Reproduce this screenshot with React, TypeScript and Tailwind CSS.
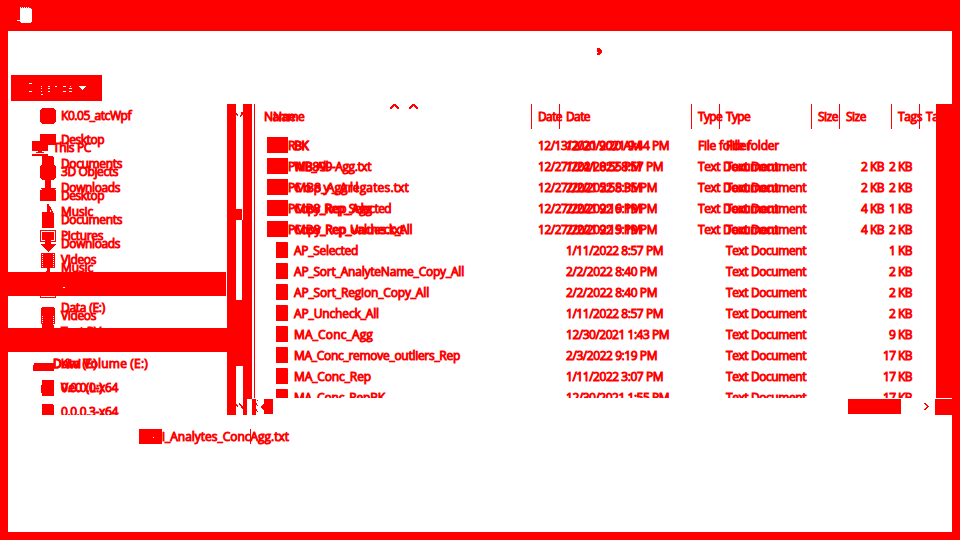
import { useLayoutEffect, useRef, useState } from 'react';

// A label whose tracking is tuned so that it fills the given width.
function Label({ text, width }: { text: string; width: number }) {
  const ref = useRef<HTMLSpanElement>(null);
  const [spacing, setSpacing] = useState(0);
  useLayoutEffect(() => {
    if (ref.current) {
      ref.current.style.letterSpacing = '0px';
      const natural = ref.current.getBoundingClientRect().width;
      setSpacing((width - natural) / text.length);
      ref.current.style.letterSpacing = `${(width - natural) / text.length}px`;
    }
  }, [text, width]);
  return (
    <span ref={ref} className="inline-block whitespace-pre" style={{ letterSpacing: `${spacing}px` }}>
      {text}
    </span>
  );
}

type IconName =
  | 'object' | 'desktop' | 'doc' | 'down' | 'music' | 'picture' | 'video' | 'pc' | 'drive' | 'disk' | 'volume' | 'none';

const shapes: Record<IconName, string> = {
  none: '',
  object: 'M2 0H14V1H15V2H16V14H15V15H14V16H2V15H1V14H0V2H1V1H2Z',
  desktop: 'M0 2H16V13H0Z',
  doc: 'M2 0H12L14 1V16H2Z',
  down: 'M5 -2H11V8H16L8 16L0 8H5Z',
  music: 'M7 0H9V2L11 4L13 8H11V6H10V12L8 15H4V12L7 11Z',
  picture: 'M0 2H16V14H0Z M1 3V13H15V3Z M2 4H14V12H2Z',
  video: 'M1 1H15V16H1Z M2 2V3H3V2Z M2 4V5H3V4Z M2 6V7H3V6Z M2 8V9H3V8Z M2 10V11H3V10Z M2 12V13H3V12Z M2 14V15H3V14Z M13 2V3H14V2Z M13 4V5H14V4Z M13 6V7H14V6Z M13 8V9H14V8Z M13 10V11H14V10Z M13 12V13H14V12Z M13 14V15H14V14Z',
  pc: 'M0 1H16V11H0Z M6 11H10V12H12V13H4V12H6Z M0 14H16V16H0Z',
  drive: 'M2 7H22V15H1V9H2Z',
  disk: 'M2 0H14V16H2V13H1V5H2Z',
  volume: 'M2 7H14V8H15V15H1V8H2Z',
};

function Icon({ name }: { name: IconName }) {
  return (
    <svg width="16" height="16" viewBox="0 0 16 16" className="shrink-0 overflow-visible" shapeRendering="crispEdges">
      <path d={shapes[name]} fill="#ff0000" fillRule="evenodd" />
    </svg>
  );
}

type Node = { icon: IconName; text: string; width: number; root?: boolean; gap?: boolean };

const treeA: Node[] = [
  { icon: 'object', text: 'K0.05_atcWpf', width: 70 },
  { icon: 'desktop', text: 'Desktop', width: 43 },
  { icon: 'doc', text: 'Documents', width: 61 },
  { icon: 'down', text: 'Downloads', width: 59 },
  { icon: 'music', text: 'Music', width: 32 },
  { icon: 'picture', text: 'Pictures', width: 42 },
  { icon: 'video', text: 'Videos', width: 35 },
  { icon: 'none', text: '', width: 1 },
  { icon: 'volume', text: 'Data (E:)', width: 44 },
  { icon: 'doc', text: 'Test PV', width: 40 },
  { icon: 'drive', text: 'Data Volume (E:)', width: 95, root: true, gap: true },
  { icon: 'doc', text: '0.0.0.0-x64', width: 57 },
  { icon: 'doc', text: '0.0.0.3-x64', width: 57 },
];

const treeB: Node[] = [
  { icon: 'pc', text: 'This PC', width: 38, root: true },
  { icon: 'object', text: '3D Objects', width: 57 },
  { icon: 'desktop', text: 'Desktop', width: 43 },
  { icon: 'doc', text: 'Documents', width: 61 },
  { icon: 'down', text: 'Downloads', width: 59 },
  { icon: 'music', text: 'Music', width: 32 },
  { icon: 'picture', text: '', width: 1 },
  { icon: 'video', text: 'Videos', width: 35 },
  { icon: 'none', text: '', width: 1 },
  { icon: 'none', text: 'DKiwi (E:)', width: 43, root: true },
  { icon: 'disk', text: 'Ve0 (L:)', width: 42 },
];

function Tree({ nodes }: { nodes: Node[] }) {
  return (
    <>
      {nodes.map((n, i) => (
        <div key={i} className={`flex h-6 shrink-0 items-start leading-6 ${n.root ? 'pl-6' : 'pl-8'} ${n.gap ? 'mt-2' : ''}`}>
          <div className="pt-1"><Icon name={n.icon} /></div>
          <div className="ml-[5px]"><Label text={n.text} width={n.width} /></div>
        </div>
      ))}
    </>
  );
}

type Row = [string, number, string, number, string, string];

const rowsA: Row[] = [
  ['RBK', 20, '12/13/2021 9:20 AM', 103, 'File folder', ''],
  ['PMB899-Agg.txt', 83, '12/27/2021 8:55 PM', 103, 'Text Document', '2 KB'],
  ['PMB8_Aggregates.txt', 121, '12/27/2021 5:55 PM', 103, 'Text Document', '2 KB'],
  ['PMB8_Rep_Agg', 84, '12/27/2021 9:16 PM', 103, 'Text Document', '4 KB'],
  ['PMB8_Rep_values.txt', 116, '12/27/2021 9:15 PM', 103, 'Text Document', '4 KB'],
];

const rowsB: Row[] = [
  ['BK', 14, '12/20/2021 9:44 PM', 103, 'File folder', ''],
  ['WB_All', 34, '1/24/2022 8:57 PM', 97, 'Text Document', '2 KB'],
  ['Copy_All', 67, '2/2/2022 8:35 PM', 91, 'Text Document', '2 KB'],
  ['Copy_Rep_Selected', 97, '2/2/2022 9:19 PM', 91, 'Text Document', '1 KB'],
  ['Copy_Rep_Uncheck_All', 118, '2/2/2022 9:19 PM', 91, 'Text Document', '2 KB'],
  ['AP_Selected', 64, '1/11/2022 8:57 PM', 97, 'Text Document', '1 KB'],
  ['AP_Sort_AnalyteName_Copy_All', 170, '2/2/2022 8:40 PM', 91, 'Text Document', '2 KB'],
  ['AP_Sort_Region_Copy_All', 135, '2/2/2022 8:40 PM', 91, 'Text Document', '2 KB'],
  ['AP_Uncheck_All', 85, '1/11/2022 8:57 PM', 97, 'Text Document', '2 KB'],
  ['MA_Conc_Agg', 79, '12/30/2021 1:43 PM', 103, 'Text Document', '9 KB'],
  ['MA_Conc_remove_outliers_Rep', 166, '2/3/2022 9:19 PM', 91, 'Text Document', '17 KB'],
  ['MA_Conc_Rep', 77, '1/11/2022 3:07 PM', 97, 'Text Document', '17 KB'],
  ['MA_Conc_RepBK', 91, '12/30/2021 1:55 PM', 103, 'Text Document', '17 KB'],
];

function Files({ rows, first }: { rows: Row[]; first: boolean }) {
  return (
    <div className="col-start-1 row-start-1">
      {rows.map((r, i) => (
        <div key={i} className="flex h-[21px] items-start leading-[22px]">
          <div className={`flex shrink-0 ${first ? 'w-[283px] pl-3' : 'w-[311px] pl-[21px]'}`}>
            <div className={`mt-0.5 h-4 shrink-0 bg-[#ff0000] ${first ? 'w-[21px]' : 'mr-[6px] w-3 rounded-tr-[1px]'}`} />
            <Label text={r[0]} width={r[1]} />
          </div>
          <div className="w-[160px] shrink-0"><Label text={r[2]} width={r[3]} /></div>
          <div className="w-[126px] shrink-0"><Label text={r[4]} width={r[4] === 'File folder' ? 53 : 80} /></div>
          <div className="w-[60px] shrink-0 text-right">
            {r[5] && <Label text={r[5]} width={r[5].length > 4 ? 29 : 23} />}
          </div>
        </div>
      ))}
    </div>
  );
}

function Headings({ first }: { first: boolean }) {
  return (
    <div className={`col-start-1 row-start-1 flex h-[25px] leading-[26px] ${first ? 'pl-[9px]' : 'pl-[18px]'}`}>
      <div className={`shrink-0 ${first ? 'w-[267px]' : 'w-[286px]'}`}><Label text="Name" width={31} /></div>
      <div className="w-[160px] shrink-0 border-l border-[#ff0000] pl-[6px]"><Label text="Date" width={24} /></div>
      <div className="w-[120px] shrink-0 border-l border-[#ff0000] pl-[6px]"><Label text="Type" width={24} /></div>
      <div className="w-[80px] shrink-0 border-l border-[#ff0000] pl-[6px]"><Label text="Size" width={20} /></div>
      <div className="shrink-0 border-l border-[#ff0000] pl-[6px]"><Label text="Tags" width={24} /></div>
    </div>
  );
}

export default function App() {
  return (
    <div className="flex h-[540px] w-[960px] flex-col overflow-hidden border-x-8 border-b-8 border-[#ff0000] bg-white font-['Open_Sans','Noto_Sans',sans-serif] text-[12px] text-[#ff0000] [-webkit-text-stroke:0.9px_#ff0000]">
      <header className="h-[31px] shrink-0 bg-[#ff0000] pl-[9px] pt-[7px]">
        <svg width="15" height="16" viewBox="0 0 15 16" shapeRendering="crispEdges">
          <path fill="white" d="M3 0H4V1H5V0H6V1H7V0H8V1H9V0H10V1H11V0H12V1H14V2H15V15H14V16H4V15H3V14H0V13H3Z" />
        </svg>
      </header>
      <div className="flex h-[44px] shrink-0 pl-[589px] pt-[17px]">
        <svg width="5" height="7" viewBox="0 0 5 7" shapeRendering="crispEdges">
          <path fill="#ff0000" d="M0 0H3V1H4V2H5V5H4V6H3V7H0V5H1V4H0V3H1V3H0Z" />
        </svg>
      </div>
      <div className="h-[29px] shrink-0 pl-[3px]">
        <div className="h-[26px] w-[91px] bg-[#ff0000]">
          <svg width="91" height="26" viewBox="0 0 91 26" shapeRendering="crispEdges">
            <path fill="white" d="M18 8h3v1h-3z M18 16h3v1h-3z M30 11h1v1h-1z M30 13h1v1h-1z M30 16h1v1h-1z M30 19h2v1h-2z M37 11h2v1h-2z M37 13h2v1h-2z M37 16h2v1h-2z M44 11h2v1h-2z M52 11h3v1h-3z M52 16h3v1h-3z M59 11h1v1h-1z M58 13h3v1h-3z M58 16h3v1h-3z M68 11h7v1h-1v1h-1v1h-1v1h-1v-1h-1v-1h-1v-1h-1z" />
          </svg>
        </div>
      </div>

      <main className="flex h-[311px] shrink-0">
        <aside className="grid h-[311px] w-[219px] shrink-0 grid-cols-1 overflow-hidden">
          <div className="col-start-1 row-start-1 h-[311px]"><Tree nodes={treeA} /></div>
          <div className="col-start-1 row-start-1 h-[311px] pt-8"><Tree nodes={treeB} /></div>
          <div className="z-10 col-start-1 row-start-1 h-[311px]">
            <div className="mt-[168px] h-6 w-[218px] bg-[#ff0000] pl-[55px] pt-[15px]">
              <div className="h-px w-[2px] bg-white" />
            </div>
            <div className="mt-8 h-6 bg-[#ff0000]" />
          </div>
        </aside>
        <svg width="28" height="311" viewBox="0 0 28 311" className="shrink-0" shapeRendering="crispEdges">
          <path fill="#ff0000" d="M0 0H9V311H0Z M16 0H25V196H16Z M15 116H25V311H20V295H16V262H15Z M16 262H20V311H16Z M9 105H15V116H9Z M9 196H16V262H9Z M27 0H28V294H27Z M9 9h1v1h1v2h-1v-1h-1z M14 8h2v3h-1v1h-1v1h-1v-2h1z M9 300h1v1h1v2h-1v-1h-1z M12 299h1v1h1v1h1v1h1v3h-1v-1h-1v-2h-1v-1h-1z" />
          <path fill="white" d="M20 295H25V311H20Z" />
          <path fill="#ff0000" d="M25 295H28V311H25Z" />
        </svg>
        <section className="flex w-[681px] shrink-0 flex-col">
          <div className="relative grid h-[25px] shrink-0 grid-cols-1 overflow-hidden">
            <Headings first />
            <Headings first={false} />
            <svg width="28" height="6" viewBox="0 0 28 6" className="absolute left-[135px] top-0" shapeRendering="crispEdges">
              <path fill="#ff0000" d="M0 3h1v-1h1v-1h1v-1h3v1h1v1h1v1h1v2h-2v-1h-1v-1h-1v-1h-1v1h-1v1h-1v1h-2z M19 3h1v-1h1v-1h1v-1h3v1h1v1h1v1h1v2h-2v-1h-1v-1h-1v-1h-1v1h-1v1h-1v1h-2z" />
            </svg>
          </div>
          <div className="grid h-[269px] shrink-0 grid-cols-1 overflow-hidden pt-[6px]">
            <Files rows={rowsA} first />
            <Files rows={rowsB} first={false} />
          </div>
          <div className="flex h-[17px] pt-px">
            <svg width="681" height="16" viewBox="0 0 681 16" shapeRendering="crispEdges">
              <path fill="#ff0000" d="M0 0H1V16H0Z M2 1h1v1h-1z M1 4h1v2h-1z M1 10h1v2h-1z M2 6h1v1h-1z M2 12h1v1h-1z M6 7h1v-1h1v-1h1v-5h9v15h-9v-4h-1v-1h-1v-1h-1z M593 0h53v15h-53z M669 4h2v1h1v1h1v1h1v1h-1v1h-1v1h-1v1h-2v-1h1v-1h1v-1h1v-1h-1v-1h-1v-1h-1z M680 0h1v16h-1z" />
            </svg>
          </div>
        </section>
        <div className="w-4 shrink-0">
          <div className="h-[294px] bg-[#ff0000]" />
          <div className="mt-px h-4 bg-[#ff0000]" />
        </div>
      </main>

      <footer className="flex h-[30px] shrink-0 items-start pl-[131px] pt-[14px] leading-4">
        <div className="h-[15px] w-[23px] shrink-0 bg-[#ff0000] pl-[14px] pt-2">
          <div className="h-px w-px bg-white" />
        </div>
        <div className="grid grid-cols-1 leading-[15px]">
          <div className="col-start-1 row-start-1"><Label text="i_Analytes_ConcAgg.txt" width={127} /></div>
          <div className="col-start-1 row-start-1 ml-[88px] h-[15px] w-px bg-[#ff0000]" />
        </div>
      </footer>
    </div>
  );
}
